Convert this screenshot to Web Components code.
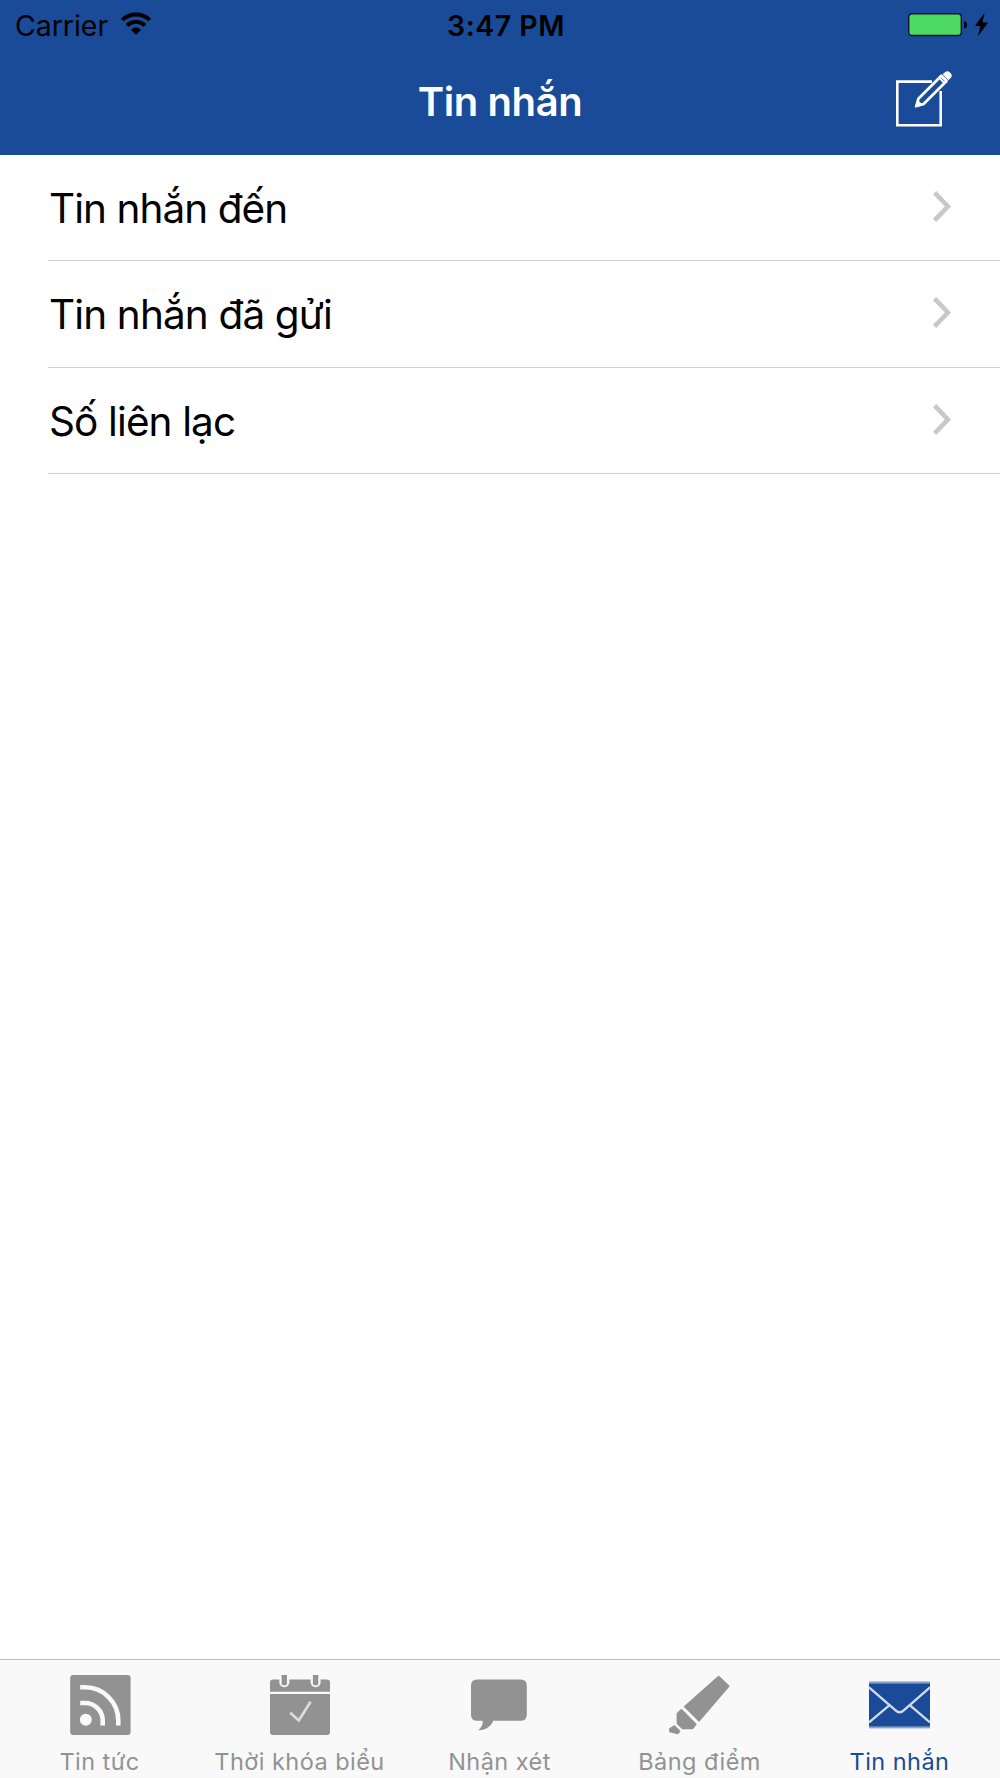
<!DOCTYPE html>
<html lang="vi">
<head>
<meta charset="utf-8">
<title>Tin nhắn</title>
<style>
  html, body {
    margin: 0;
    height: 100%;
    background: #fff;
    overflow: hidden;
  }
  body {
    --brand: #194b98;
    --muted: #929292;
    font-family: Inter, "Noto Sans", sans-serif;
    color: #000;
  }
</style>
</head>
<body>
<app-screen>
  <status-bar slot="top" carrier="Carrier" time="3:47 PM"></status-bar>
  <nav-bar slot="top">Tin nhắn<app-icon slot="action" name="compose" width="60" height="60"></app-icon></nav-bar>
  <list-row style="--track: -0.95px">Tin nhắn đến</list-row>
  <list-row style="--track: -0.86px">Tin nhắn đã gửi</list-row>
  <list-row style="--track: -0.88px">Số liên lạc</list-row>
  <tab-bar slot="bottom">
    <tab-item icon="rss">Tin tức</tab-item>
    <tab-item icon="calendar">Thời khóa biểu</tab-item>
    <tab-item icon="chat">Nhận xét</tab-item>
    <tab-item icon="marker">Bảng điểm</tab-item>
    <tab-item icon="mail" active>Tin nhắn</tab-item>
  </tab-bar>
</app-screen>

<script>
// Shapes are drawn with currentColor; --cut is the colour of the gaps in them
const ICONS = {
  wifi: `
    <g fill="none" stroke="currentColor" stroke-width="3.9">
      <path d="M1.2 6.9 A20.5 20.5 0 0 1 28.8 6.9"/>
      <path d="M6 12.5 A13 13 0 0 1 24 12.5"/>
    </g>
    <path fill="currentColor" d="M9.9 16.8 Q15 11.8 20.1 16.8 L15 21.8 Z"/>`,
  battery: `
    <rect x=".7" y=".7" width="52.6" height="21.8" rx="3.2" fill="#4cd964" stroke="#06152c" stroke-width="1.4"/>
    <path fill="currentColor" d="M56 8 Q59 8.5 59 11.7 Q59 15 56 15.5 Z"/>`,
  bolt: `<path fill="currentColor" d="M9.6 0 L0 12.8 L5.3 13.2 L2.9 23.3 L13 9.7 L7.4 9.3 Z"/>`,
  compose: `
    <path fill="none" stroke="currentColor" stroke-width="2.6" d="M36 11.6 H1.3 V55.3 H44.7 V21"/>
    <path fill="none" stroke="currentColor" stroke-width="2.7" stroke-linejoin="round" d="M45.3 5.7 L22.4 28.7 L20.4 36 L27.6 34 L50.6 11 Z"/>
    <path fill="none" stroke="currentColor" stroke-width="2" d="M43.6 8.1 L48.2 12.7"/>
    <path fill="currentColor" d="M21.3 29.5 L27.3 35.3 L18.6 37.8 Z"/>
    <path fill="currentColor" d="M46.6 4.3 L49.3 1.9 Q51.8 .4 54.2 2.8 Q57 5.3 54.9 7.8 L52.4 10.2 Z"/>`,
  chevron: `<path fill="none" stroke="currentColor" stroke-width="4.6" d="M1.6 1.7 L14.9 15.5 L1.6 29.3"/>`,
  rss: `
    <rect x=".2" y="0" width="60.4" height="60" rx="3" fill="currentColor"/>
    <circle cx="15.8" cy="44.7" r="6" fill="var(--cut)"/>
    <g fill="none" stroke="var(--cut)" stroke-width="4.6">
      <path d="M10.2 28 H15 A17.7 17.7 0 0 1 32.7 45.6 V50.5"/>
      <path d="M10.2 12.3 H15 A33.3 33.3 0 0 1 48.3 45.6 V50.5"/>
    </g>`,
  calendar: `
    <path fill="currentColor" d="M3 4.5 H57 Q60 4.5 60 7.5 V57 Q60 60 57 60 H3 Q0 60 0 57 V7.5 Q0 4.5 3 4.5 Z"/>
    <path stroke="var(--cut)" stroke-width="2.4" d="M0 17.9 H60"/>
    <g stroke="var(--cut)" stroke-width="10" stroke-linecap="round"><path d="M14.3 1 V7.3"/><path d="M45.6 1 V7.3"/></g>
    <g fill="currentColor"><path d="M11.6 0 H17 V8.8 Q17 10.2 15.6 10.2 H13 Q11.6 10.2 11.6 8.8 Z"/><path d="M42.9 0 H48.3 V8.8 Q48.3 10.2 46.9 10.2 H44.3 Q42.9 10.2 42.9 8.8 Z"/></g>
    <path fill="none" stroke="#dcdcdc" stroke-width="2.7" d="M20.2 37.8 L28.8 45.4 L40.6 26.8"/>`,
  chat: `<path fill="currentColor" d="M7 4.4 H50.8 Q56.8 4.4 56.8 10.4 V39.7 Q56.8 45.7 50.8 45.7 H23.3 C21 51.5 15.5 55.5 8.2 55.2 Q13.2 51.2 12.7 45.7 H7 Q1 45.7 1 39.7 V10.4 Q1 4.4 7 4.4 Z"/>`,
  marker: `
    <g fill="currentColor" stroke="currentColor" stroke-linejoin="round" stroke-width="1.8">
      <path d="M48.7 1.6 L58.6 11.2 L29 45.6 L14.9 31.7 Z"/>
      <path d="M11.4 34.9 L25.8 49.3 L22.6 53.3 H12.6 L7.5 48.3 V38.6 Z"/>
      <path d="M4.3 51.2 L9.4 56.2 L7.6 58.4 L0 56.5 V53.8 Z"/>
    </g>`,
  mail: `
    <rect x="-1" y="6.4" width="61" height="47" fill="currentColor" opacity=".5"/>
    <rect x="-1" y="8.6" width="61" height="42.8" fill="currentColor"/>
    <g fill="none" stroke="#d0daea" stroke-width="2.4">
      <path d="M-1 12.3 L25 34.8 Q29.6 39.6 34.3 34.8 L60 12.3"/>
      <path d="M-1 47.3 L19 30.6 M40.3 30.6 L60 47.3"/>
    </g>`
};

// <app-icon name="wifi" width="30" height="22"></app-icon>
class AppIcon extends HTMLElement {
  constructor() {
    super();
    this.attachShadow({ mode: 'open' });
  }

  connectedCallback() {
    const w = this.getAttribute('width') || 60;
    const h = this.getAttribute('height') || 60;
    this.shadowRoot.innerHTML = `
      <style>
        :host { display: block; width: ${w}px; height: ${h}px; flex-shrink: 0; }
        svg { display: block; overflow: visible; }
      </style>
      <svg width="${w}" height="${h}" viewBox="0 0 ${w} ${h}" aria-hidden="true">${ICONS[this.getAttribute('name')] || ''}</svg>
    `;
  }
}

class AppScreen extends HTMLElement {
  constructor() {
    super();
    this.attachShadow({ mode: 'open' }).innerHTML = `
      <style>
        :host { display: flex; flex-direction: column; height: 100vh; }
        header { height: 155px; flex-shrink: 0; background: var(--brand); }
        main { flex: 1; min-height: 0; }
      </style>
      <header><slot name="top"></slot></header>
      <main><slot></slot></main>
      <slot name="bottom"></slot>
    `;
  }
}

class StatusBar extends HTMLElement {
  constructor() {
    super();
    this.attachShadow({ mode: 'open' });
  }

  connectedCallback() {
    this.shadowRoot.innerHTML = `
      <style>
        :host {
          display: grid;
          grid-template-columns: 1fr auto 1fr;
          height: 51px;
          padding: 0 12px 0 15px;
          box-sizing: border-box;
          font-size: 28.5px;
          line-height: 51px;
        }
        .left, .right { display: flex; }
        .left { letter-spacing: -0.05px; }
        .left app-icon { margin: 13px 0 0 13px; }
        .time { font-weight: 600; letter-spacing: 0.5px; padding-left: 9px; }
        .right { justify-content: flex-end; padding-top: 13px; gap: 8px; }
      </style>
      <div class="left"><span>${this.getAttribute('carrier')}</span><app-icon name="wifi" width="30" height="22"></app-icon></div>
      <div class="time">${this.getAttribute('time')}</div>
      <div class="right">
        <app-icon name="battery" width="59" height="23"></app-icon>
        <app-icon name="bolt" width="13" height="24"></app-icon>
      </div>
    `;
  }
}

class NavBar extends HTMLElement {
  constructor() {
    super();
    this.attachShadow({ mode: 'open' }).innerHTML = `
      <style>
        :host {
          display: grid;
          grid-template-columns: 1fr auto 1fr;
          height: 104px;
          color: #fff;
        }
        .title { grid-column: 2; font-size: 40px; font-weight: 600; line-height: 101px; letter-spacing: -0.4px; white-space: nowrap; }
        .action { display: flex; justify-content: flex-end; padding: 19px 44px 0 0; }
      </style>
      <div class="title"><slot></slot></div>
      <div class="action"><slot name="action"></slot></div>
    `;
  }
}

class ListRow extends HTMLElement {
  constructor() {
    super();
    this.attachShadow({ mode: 'open' }).innerHTML = `
      <style>
        :host {
          display: flex;
          justify-content: space-between;
          height: 106.33px;
          box-sizing: border-box;
          margin-left: 48px;
          padding: 0 49px 0 1px;
          border-bottom: 1px solid #d0cfd5;
          font-size: 40.5px;
          line-height: 107px;
          letter-spacing: var(--track, 0);
        }
        app-icon { margin-top: 36px; color: #c7c7cc; }
      </style>
      <span><slot></slot></span>
      <app-icon name="chevron" width="18" height="31"></app-icon>
    `;
  }
}

class TabBar extends HTMLElement {
  constructor() {
    super();
    this.attachShadow({ mode: 'open' }).innerHTML = `
      <style>
        :host {
          --cut: #f9f9f9;
          display: grid;
          grid-template-columns: repeat(5, 1fr);
          height: 119px;
          box-sizing: border-box;
          background: #f9f9f9;
          border-top: 1px solid #bdbdbf;
        }
      </style>
      <slot></slot>
    `;
  }
}

class TabItem extends HTMLElement {
  constructor() {
    super();
    this.attachShadow({ mode: 'open' });
  }

  connectedCallback() {
    this.shadowRoot.innerHTML = `
      <style>
        :host {
          display: flex;
          flex-direction: column;
          align-items: center;
          padding-top: 15px;
          color: var(--muted);
          font-size: 23.5px;
          line-height: 30px;
          letter-spacing: 0.45px;
          white-space: nowrap;
        }
        :host([active]) { color: var(--brand); }
        span { margin: 12px 1px 0 0; }
      </style>
      <app-icon name="${this.getAttribute('icon')}"></app-icon>
      <span><slot></slot></span>
    `;
  }
}

customElements.define('app-icon', AppIcon);
customElements.define('app-screen', AppScreen);
customElements.define('status-bar', StatusBar);
customElements.define('nav-bar', NavBar);
customElements.define('list-row', ListRow);
customElements.define('tab-bar', TabBar);
customElements.define('tab-item', TabItem);
</script>
</body>
</html>
